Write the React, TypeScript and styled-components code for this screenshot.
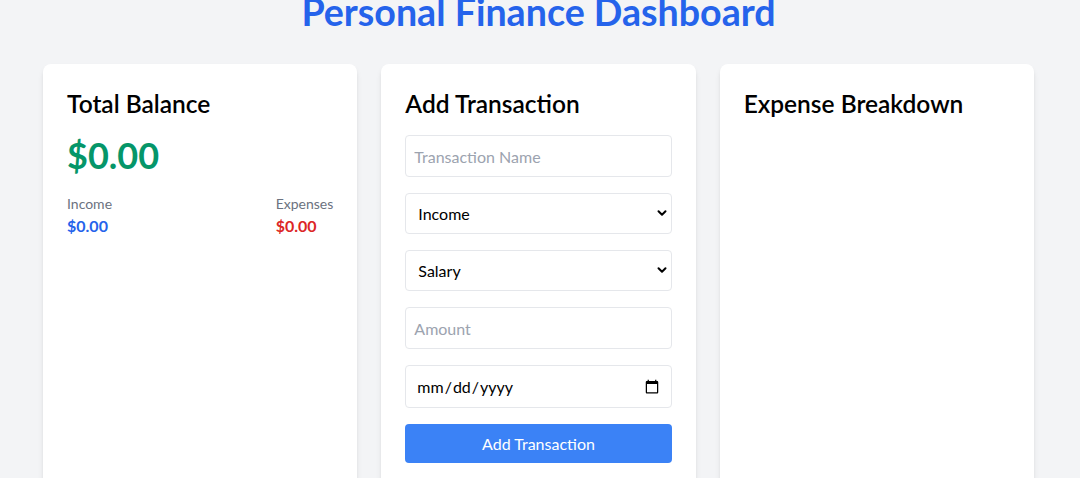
import React from "react";
import styled, { createGlobalStyle } from "styled-components";

const Global = createGlobalStyle`
  html, body { margin: 0; padding: 0; background: #f3f4f6; }
  body { font-family: Lato, "Open Sans", Arial, sans-serif; color: #000; overflow: hidden; }
  * { box-sizing: border-box; }
`;

const Page = styled.div`
  padding: 0 46px 0 43px;
`;

const Heading = styled.h1`
  margin: -8px 0 32px;
  font-size: 37.6px;
  line-height: 40px;
  font-weight: 700;
  color: #2563eb;
  text-align: center;
`;

const Grid = styled.div`
  display: grid;
  grid-template-columns: repeat(3, 1fr);
  gap: 24px;
`;

const Card = styled.section`
  background: #fff;
  border-radius: 8px;
  padding: 24px;
  min-height: 440px;
  box-shadow: 0 4px 6px -1px rgba(0, 0, 0, 0.1), 0 2px 4px -2px rgba(0, 0, 0, 0.1);
`;

const CardTitle = styled.h2`
  margin: 0 0 15px;
  font-size: 24.5px;
  line-height: 32px;
  font-weight: 600;
`;

const Balance = styled.div`
  font-size: 36px;
  line-height: 40px;
  font-weight: 700;
  color: #059669;
  margin-bottom: 19px;
`;

const Split = styled.div`
  display: flex;
  justify-content: space-between;
`;

const StatLabel = styled.div`
  font-size: 14px;
  line-height: 20px;
  color: #6b7280;
`;

const StatValue = styled.div<{ $tone: "income" | "expense" }>`
  font-size: 16px;
  line-height: 24px;
  font-weight: 700;
  color: ${(p) => (p.$tone === "income" ? "#2563eb" : "#dc2626")};
`;

const Form = styled.form`
  display: flex;
  flex-direction: column;
  gap: 16px;
`;

const fieldCss = `
  width: 100%;
  height: 42px;
  padding: 8px;
  border: 1px solid #e5e7eb;
  border-radius: 4px;
  background: #fff;
  font-family: inherit;
  font-size: 16px;
  line-height: 24px;
  color: #000;
  outline: none;
`;

const Input = styled.input`
  ${fieldCss}
  &::placeholder { color: #9ca3af; }
`;

const DateInput = styled.input`
  ${fieldCss}
  height: 43px;
  padding-left: 10px;
  padding-right: 9px;
`;

const SelectWrap = styled.div`
  position: relative;
`;

const Select = styled.select`
  ${fieldCss}
  height: 41px;
  padding-left: 12px;
  appearance: none;
  -webkit-appearance: none;
`;

const Chevron = styled.svg`
  position: absolute;
  right: 5px;
  top: 15px;
  width: 10px;
  height: 10px;
  pointer-events: none;
`;

const Button = styled.button`
  height: 39px;
  border: none;
  border-radius: 4px;
  background: #3b82f6;
  color: #fff;
  font-family: inherit;
  font-size: 16px;
  cursor: pointer;
`;

const Arrow = () => (
  <Chevron viewBox="0 0 10 10">
    <path d="M1.5 3.2 L5 6.7 L8.5 3.2" fill="none" stroke="#000" strokeWidth="2" strokeLinecap="round" strokeLinejoin="round" />
  </Chevron>
);

export default function App() {
  return (
    <>
      <Global />
      <Page>
        <Heading>Personal Finance Dashboard</Heading>
        <Grid>
          <Card>
            <CardTitle>Total Balance</CardTitle>
            <Balance>$0.00</Balance>
            <Split>
              <div>
                <StatLabel>Income</StatLabel>
                <StatValue $tone="income">$0.00</StatValue>
              </div>
              <div>
                <StatLabel>Expenses</StatLabel>
                <StatValue $tone="expense">$0.00</StatValue>
              </div>
            </Split>
          </Card>
          <Card>
            <CardTitle>Add Transaction</CardTitle>
            <Form onSubmit={(e) => e.preventDefault()}>
              <Input type="text" placeholder="Transaction Name" />
              <SelectWrap>
                <Select defaultValue="income">
                  <option value="income">Income</option>
                  <option value="expense">Expense</option>
                </Select>
                <Arrow />
              </SelectWrap>
              <SelectWrap>
                <Select defaultValue="salary">
                  <option value="salary">Salary</option>
                  <option value="freelance">Freelance</option>
                </Select>
                <Arrow />
              </SelectWrap>
              <Input type="number" placeholder="Amount" />
              <DateInput type="date" />
              <Button type="submit">Add Transaction</Button>
            </Form>
          </Card>
          <Card>
            <CardTitle>Expense Breakdown</CardTitle>
          </Card>
        </Grid>
      </Page>
    </>
  );
}
